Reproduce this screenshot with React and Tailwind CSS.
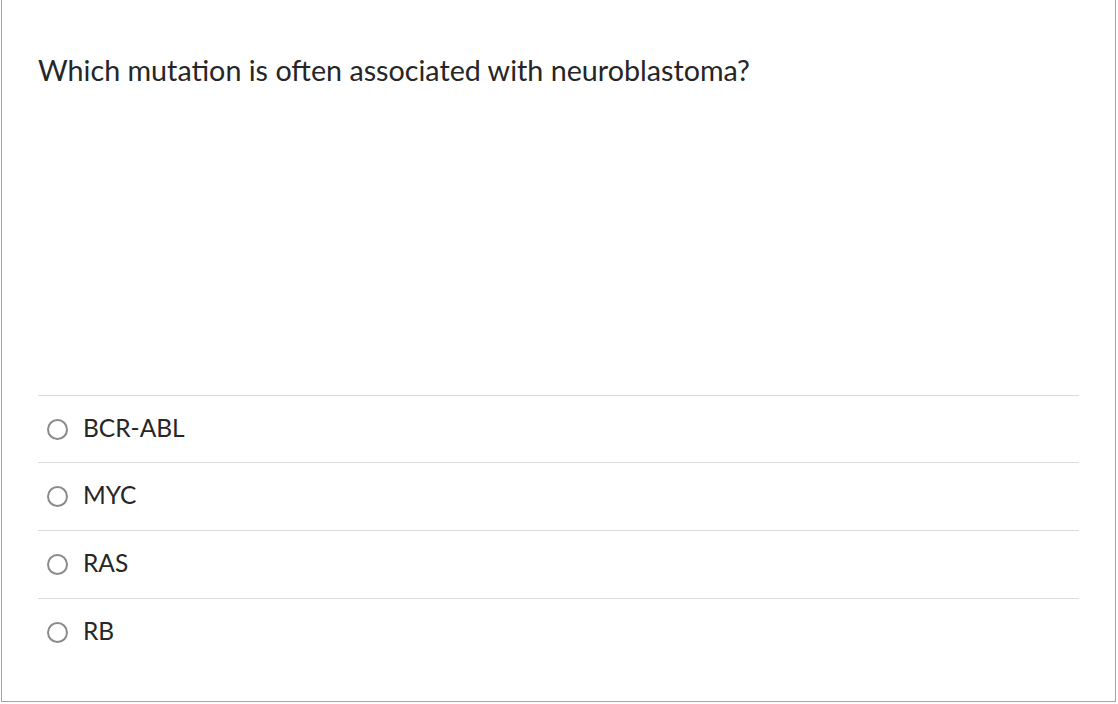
export default function App() {
  const options = [
    { label: "BCR-ABL", h: "h-[67px]" },
    { label: "MYC", h: "h-[68px]" },
    { label: "RAS", h: "h-[68px]" },
    { label: "RB", h: "h-[68px]" },
  ];
  return (
    <div className="w-[1118px] h-[704px] bg-white" style={{ fontFamily: "Lato, 'Open Sans', sans-serif" }}>
      <div className="ml-[1px] w-[1115px] h-[702px] border-x border-b border-[#a3a3a3] bg-white px-[36px] flex flex-col">
        <div className="pt-[54px] text-[28.7px] leading-[32px] text-[#262626] h-[395px] shrink-0">
          Which mutation is often associated with neuroblastoma?
        </div>
        <div className="flex flex-col">
          {options.map((o) => (
            <div
              key={o.label}
              className={`${o.h} border-t border-[#dcdcdc] flex items-center pl-[9px]`}
            >
              <span className="w-[21px] h-[21px] rounded-full border-2 border-[#8a8a8a] shrink-0" />
              <span className="block ml-[15px] pb-[3px] text-[24.5px] leading-[28px] text-[#262626]">{o.label}</span>
            </div>
          ))}
        </div>
      </div>
    </div>
  );
}
